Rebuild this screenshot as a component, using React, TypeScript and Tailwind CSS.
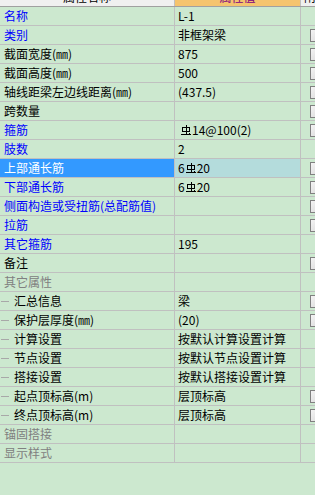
import React from 'react';

type Row = {
  label: string;
  value?: React.ReactNode;
  tone: 'blue' | 'black' | 'gray';
  check?: boolean;
  child?: boolean;
  active?: boolean;
};

// HRB400 steel grade mark
const Steel: React.FC = () => (
  <svg width="12" height="12" viewBox="0 0 12 12" className="inline-block align-[-1px]" fill="none" stroke="#000" strokeWidth="1" shapeRendering="crispEdges">
    <path d="M6 1V11" />
    <path d="M2.5 3.5H9.5V7.5H2.5Z" />
    <path d="M1 10.5H11" />
    <path d="M9 9L10 10" />
  </svg>
);

const rows: Row[] = [
  { label: '名称', value: 'L-1', tone: 'blue' },
  { label: '类别', value: '非框架梁', tone: 'blue', check: true },
  { label: '截面宽度(㎜)', value: '875', tone: 'black', check: true },
  { label: '截面高度(㎜)', value: '500', tone: 'black', check: true },
  { label: '轴线距梁左边线距离(㎜)', value: '(437.5)', tone: 'black', check: true },
  { label: '跨数量', value: '', tone: 'black', check: true },
  { label: '箍筋', value: <span className="pl-[2px]"><Steel />14@100(2)</span>, tone: 'blue', check: true },
  { label: '肢数', value: '2', tone: 'blue' },
  { label: '上部通长筋', value: <>6<Steel />20</>, tone: 'blue', check: true, active: true },
  { label: '下部通长筋', value: <>6<Steel />20</>, tone: 'blue', check: true },
  { label: '侧面构造或受扭筋(总配筋值)', value: '', tone: 'blue', check: true },
  { label: '拉筋', value: '', tone: 'blue', check: true },
  { label: '其它箍筋', value: '195', tone: 'blue' },
  { label: '备注', value: '', tone: 'black', check: true },
  { label: '其它属性', value: '', tone: 'gray' },
  { label: '汇总信息', value: '梁', tone: 'black', check: true, child: true },
  { label: '保护层厚度(㎜)', value: '(20)', tone: 'black', check: true, child: true },
  { label: '计算设置', value: '按默认计算设置计算', tone: 'black', child: true },
  { label: '节点设置', value: '按默认节点设置计算', tone: 'black', child: true },
  { label: '搭接设置', value: '按默认搭接设置计算', tone: 'black', child: true },
  { label: '起点顶标高(m)', value: '层顶标高', tone: 'black', check: true, child: true },
  { label: '终点顶标高(m)', value: '层顶标高', tone: 'black', check: true, child: true },
  { label: '锚固搭接', value: '', tone: 'gray' },
  { label: '显示样式', value: '', tone: 'gray' },
];

const toneClass = {
  blue: 'text-[#0000ff]',
  black: 'text-black',
  gray: 'text-[#808080]',
};

const App: React.FC = () => {
  return (
    <div
      className="w-[315px] h-[495px] overflow-hidden bg-[#cce8cf] text-[12px] leading-[18px]"
      style={{ fontFamily: '"Noto Sans CJK SC", "Liberation Sans", sans-serif' }}
    >
      {/* Header (mostly scrolled out of view) */}
      <div className="flex h-[7px] overflow-hidden border-b border-[#a0a0a0]">
        <div className="w-[175px] bg-[#f0f0f0] border-r border-[#c0c0c0] flex justify-center">
          <span className="-mt-[12px] text-black">属性名称</span>
        </div>
        <div className="w-[126px] bg-[#f5c46e] border-r border-[#c0c0c0] flex justify-center">
          <span className="-mt-[12px] text-[#800080]">属性值</span>
        </div>
        <div className="flex-1 bg-[#f0f0f0] overflow-hidden">
          <span className="-mt-[12px] block pl-[3px] text-black">附加</span>
        </div>
      </div>

      {rows.map((r, i) => (
        <div key={i} className="flex h-[19px] border-b border-[#c0c0c0]">
          <div
            className={`w-[175px] border-r border-[#c0c0c0] flex items-center whitespace-nowrap overflow-hidden ${
              r.active ? 'bg-[#3399ff] text-white' : toneClass[r.tone]
            } ${r.child ? 'pl-0' : 'pl-[4px]'}`}
          >
            {r.child && <span className="w-[8px] h-px bg-[#a8a8a8] ml-[1px] mr-[5px] shrink-0" />}
            {r.label}
          </div>
          <div
            className={`w-[126px] border-r border-[#c0c0c0] flex items-center pl-[3px] whitespace-nowrap overflow-hidden text-black ${
              r.active ? 'bg-[#b4dcdc]' : ''
            }`}
          >
            {r.value}
          </div>
          <div className="flex-1 relative overflow-hidden">
            {r.check && (
              <div className="absolute left-[9px] top-[3px] w-[13px] h-[13px] border border-[#808080] bg-gradient-to-br from-[#f4f4f4] to-[#d8d8d8]" />
            )}
          </div>
        </div>
      ))}
    </div>
  );
};

export default App;
